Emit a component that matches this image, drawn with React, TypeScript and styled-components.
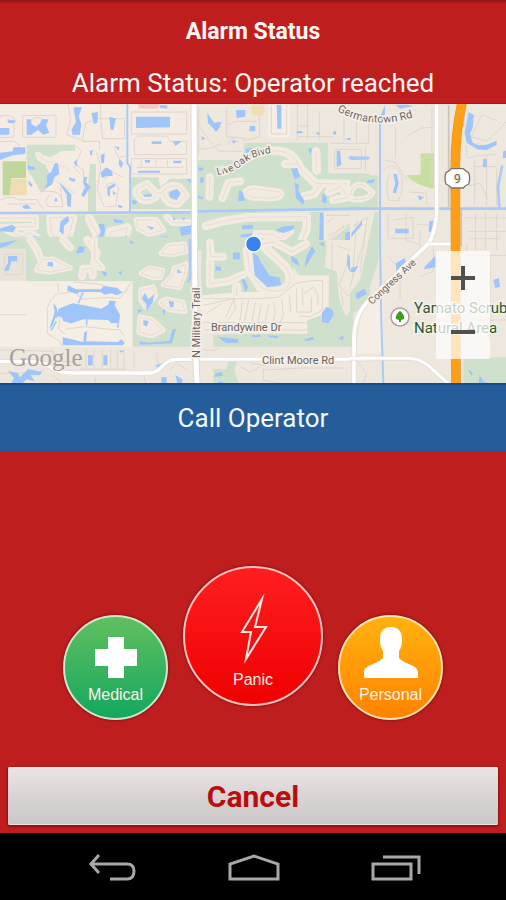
import React from "react";
import styled, { createGlobalStyle } from "styled-components";

const GlobalStyle = createGlobalStyle`
  * { box-sizing: border-box; }
  body { margin: 0; background: #be1e1e; font-family: Roboto, "Liberation Sans", sans-serif; }
  button { font-family: inherit; cursor: pointer; }
`;

const Screen = styled.div`
  display: flex;
  flex-direction: column;
  min-height: 100vh;
  background: #be1e1e;
  overflow: hidden;
`;

const Header = styled.header`
  display: flex;
  flex-direction: column;
  align-items: center;
  padding-top: 15px;
  background: linear-gradient(#8c1416, #be1e1e 4px);
  color: #fff5f3;
  border-bottom: 1px solid #bb1013;
`;

const Title = styled.h1`
  margin: 0;
  font-size: 23px;
  line-height: 34px;
  font-weight: 700;
`;

const Status = styled.p`
  margin: 14px 0 0;
  font-size: 26px;
  line-height: 40px;
`;

const MapPanel = styled.section`
  position: relative;
  aspect-ratio: 506 / 279;
  overflow: hidden;
  background: #f0eae1;
`;

const MapDrawing = styled.svg`
  display: block;
  width: 100%;
  height: 100%;
`;

const ZoomControls = styled.div`
  position: absolute;
  right: 16px;
  bottom: 24px;
  display: flex;
  flex-direction: column;
  background: rgba(255, 255, 255, 0.72);
  border-radius: 2px;
`;

const ZoomButton = styled.button`
  display: grid;
  place-items: center;
  width: 54px;
  height: 54px;
  padding: 0;
  border: 0;
  background: transparent;
`;

const CallButton = styled.button`
  height: 68px;
  padding: 0;
  border: 0;
  border-top: 2px solid #134b8b;
  background: #255d9a;
  color: #f3f9ff;
  font-size: 26px;
`;

const Actions = styled.main`
  flex: 1;
  display: flex;
  justify-content: center;
  align-items: flex-end;
  gap: 15px;
  padding: 40px 0 47px;
`;

const tones = {
  medical: { fill: "linear-gradient(#63c05f, #12a75f)", ring: "#cfe9cf" },
  panic: { fill: "linear-gradient(#ff1f1f, #ee0000)", ring: "#ffc2c0" },
  personal: { fill: "linear-gradient(#ffb310, #ff8200)", ring: "#ffe3b0" },
};

const RoundButton = styled.button<{ $tone: keyof typeof tones; $large?: boolean }>`
  display: flex;
  flex-direction: column;
  align-items: center;
  justify-content: flex-end;
  width: ${(p) => (p.$large ? 140 : 105)}px;
  height: ${(p) => (p.$large ? 140 : 105)}px;
  margin-bottom: ${(p) => (p.$large ? 14 : 0)}px;
  padding: 0 0 ${(p) => (p.$large ? 14 : 13)}px;
  border: 2px solid ${(p) => tones[p.$tone].ring};
  border-radius: 50%;
  background: ${(p) => tones[p.$tone].fill};
  background-origin: border-box;
  box-shadow: 0 0 2px 1px rgba(110, 15, 20, 0.6);
  color: #fff0e6;
  font-family: "Liberation Sans", Arial, sans-serif;
  font-size: 16px;
  line-height: 20px;
`;

const IconSlot = styled.span`
  display: flex;
  margin-bottom: 6px;
`;

const Footer = styled.footer`
  padding: 0 8px 8px;
`;

const CancelButton = styled.button`
  display: block;
  width: 100%;
  height: 58px;
  padding: 0;
  border: 0;
  border-radius: 2px;
  background: linear-gradient(#eae3e3, #cac6c6);
  box-shadow: inset 0 1px #fbe9e9, inset 0 -1px #eee4e4, 0 1px 2px 1px #8f1012;
  color: #b90d10;
  font-size: 30px;
  font-weight: 700;
`;

const NavBar = styled.nav`
  display: grid;
  grid-template-columns: repeat(3, 28%);
  justify-content: center;
  height: 67px;
  background: #000;
`;

const NavButton = styled.button`
  display: grid;
  place-items: center;
  padding: 3px 0 0 2px;
  border: 0;
  background: transparent;
  color: #a8a8a8;
`;

/* Local street: a pale lot band with a thin road line along its middle. */
const Street = ({ d, w = 30, filled = false }: { d: string; w?: number; filled?: boolean }) => (
  <g fill="none" strokeLinejoin="round" strokeLinecap="round">
    <path d={d} stroke="#f3ebe2" strokeWidth={w} fill={filled ? "#f3ebe2" : "none"} />
    <path d={d} stroke="#e0d7cf" strokeWidth="2" />
  </g>
);
const Lanes = ({ d }: { d: string }) => (
  <path d={d} fill="none" stroke="#dfd6ce" strokeWidth="3" strokeLinejoin="round" />
);
const Park = ({ d, color = "#cfe0cd" }: { d: string; color?: string }) => <path d={d} fill={color} />;
const Water = ({ d }: { d: string }) => <path d={d} fill="#9fc5fb" />;
const Canal = ({ d, w = 8 }: { d: string; w?: number }) => (
  <path d={d} fill="none" stroke="#a9cbf6" strokeWidth={w} strokeLinejoin="round" strokeLinecap="round" />
);
const Road = ({ d, w = 14 }: { d: string; w?: number }) => (
  <g fill="none" strokeLinejoin="round">
    <path d={d} stroke="#e2dcd4" strokeWidth={w + 4} />
    <path d={d} stroke="#fff" strokeWidth={w} />
  </g>
);
const Label = styled.text`
  font-family: Roboto, "Liberation Sans", sans-serif;
  fill: #6a635e;
  stroke: #f5f0e9;
  stroke-width: 3px;
  paint-order: stroke;
`;
const PlaceLabel = styled(Label)`
  fill: #2c5a30;
`;
const Brand = styled.text`
  font-family: "Liberation Serif", serif;
  fill: #a8a29c;
`;

const NorthWest = () => (
  <g transform="translate(0 100) scale(.33333)">
    <Park d="M80 134H226V152H186L150 172L105 156L112 180L135 190L150 225L143 262L124 280L108 250L80 205Z" />
    <Park d="M270 192H288V336H264V262Z" />
    <Park d="M390 232H475L480 262L510 236H574V450H390V336L574 336V328H388Z" />
    <Park d="M0 344H574V450H0Z" />
    <Park d="M8 184H78V234H34V286H8Z" color="#c0d79b" />
    <Park d="M34 236H80V286H28Z" color="#eedcb2" />
    <Park d="M415 12H475V26H415Z" color="#f4c7c4" />
    <Lanes d="M0 50Q20 40 42 54V112H0M0 124H44L60 138M68 46H168V112H68ZM96 58Q114 46 132 60M204 12L212 60L200 104L246 120L258 68L302 55V14M246 124H298V150M302 56H374V116H308ZM0 300Q28 284 58 300L110 298L128 326M22 312H108M230 138L244 154L222 204L240 220M290 158L302 200L292 270L312 320M340 140L356 172L378 168M394 36H560V102H394ZM402 120L414 108H500L512 124H560V164H404ZM394 176H560V222H394ZM410 202H550M424 178V200M468 178V200M502 178V200" />
    <Lanes d="M84 220Q108 222 122 272L168 276Q190 290 188 320H144Q130 300 150 284M180 254L188 320M218 186L250 210L252 290M310 240L340 216L368 232M312 266Q338 230 356 264L346 320H316" />
    <Street d="M116 166Q136 194 164 184M156 206Q180 186 206 210M172 244Q206 270 226 280" w={20} />
    <Street d="M415 288Q400 274 420 262L442 252L470 280L488 276Q510 248 540 262L558 286L536 310Q500 318 488 276M415 288Q432 312 466 292" w={24} />
    <Street d="M0 354H106V380L0 382M20 390L64 410L88 398L112 412L124 440" w={22} />
    <Street d="M150 354L154 398L182 432L208 406L220 354Z" w={24} filled />
    <Street d="M268 356L292 404L282 450M330 396L382 384L376 408L332 424Z" w={28} />
    <Street d="M410 360L468 360L490 390L448 402L416 386Z" w={18} filled />
    <Street d="M500 350L518 368H570M488 436Q516 416 562 440" w={20} />
    <Water d="M220 22L246 22L236 48L244 72L240 104L218 104L214 90L228 66ZM274 40L294 36L292 68L282 72ZM328 50L348 56L340 90H332ZM80 58H94V72L108 80L120 70L126 58H146L138 76L148 98L130 104L114 90L94 104H80ZM22 58L50 62L40 70L24 68ZM0 84H28V104H0ZM408 50H510V82L408 84ZM478 16H502V26L480 24ZM455 124H484V132H455ZM518 124L546 124L526 138Z" />
    <Water d="M0 158L38 154L40 142H76V162L38 166L0 180ZM164 190H174L178 222L164 230L156 254L132 266L142 250L140 226L154 216ZM176 246L198 266L214 284L212 322L202 318L200 284ZM252 230L262 232L258 246L272 262L250 292L244 284L256 262L250 248ZM302 166L314 160L312 190L304 190ZM358 176L370 190L364 204L356 194ZM302 218L318 202L336 212L338 228L320 228L306 234ZM322 262L346 250L344 260L330 268L330 290L322 284ZM270 152L278 150L276 166L270 166ZM222 188L230 176L232 202ZM344 138L358 142L356 152ZM162 304L168 292L174 304ZM84 196L106 202L104 210L84 208ZM86 240L98 256L94 262L86 252ZM66 318L82 314L94 326L72 326ZM354 314L368 318L364 324L354 322ZM206 232L228 238L222 246L208 240ZM338 272L350 282L340 284Z" />
    <Water d="M508 278L530 266L542 280L530 300L510 292ZM434 180H450V188H436ZM520 182H544V190H520ZM414 212H480V218H414ZM430 284L456 282L454 290L432 290ZM396 300L412 304L406 314L396 310ZM560 238L574 236V252ZM182 364L204 348L208 362L192 378L190 404L178 394ZM296 372H312L316 392L302 426L290 416L302 396ZM0 386L36 374L48 382L40 396L0 394ZM340 356L370 362L368 370L344 368ZM438 378L462 382L456 390ZM480 410L504 408L494 434L470 428ZM538 382L574 376V402L544 408ZM350 428L382 406L378 420L352 432ZM96 408L132 412L136 430L122 440ZM240 408L254 430L250 444L236 446ZM518 350L528 356L522 362ZM546 352L556 354L550 362Z" />
    <Canal d="M0 339L574 337" w={8} />
    <Canal d="M382 14V190L390 200V337" w={6} />
  </g>
);

const SouthWest = () => (
  <g transform="translate(0 240) scale(.33333)">
    <Park d="M78 20H574V320H398V124H78Z" />
    <Park d="M0 -10H574V30H0Z" />
    <path d="M0 124H396V320H0Z" fill="#f5eee4" />
    <path d="M0 26H78V122H0Z" fill="#e9e2d8" />
    <Lanes d="M14 42H68V104H14ZM0 224H78M174 128L176 158L154 178L142 202V280L180 304L186 320M178 162L226 154L244 178L320 172L356 176L386 148M196 268L250 260L332 268L360 270L374 290M222 126L296 132L372 158L396 124M180 230L176 268L196 282M258 328V388M282 328V388M306 328V388M332 328V388M352 328V388M372 328V388M240 388H380M402 334V380M470 340L472 378M0 330L160 334V362L228 366M0 402L46 398L110 402L132 388M160 404L186 430M286 412V430M430 404L438 430M510 390L530 368L560 390" />
    <Street d="M92 0L112 32L122 56" w={24} />
    <Street d="M126 58L110 90L152 96L210 84L162 58Z" w={16} filled />
    <Street d="M190 0L210 22M262 0L290 38L282 68L300 80M246 108L250 86H278V106" w={24} />
    <Street d="M484 40L504 18L552 12L558 34L518 44ZM488 92L448 84L424 100L456 112H482ZM490 134L516 110L524 84L558 72L552 108L538 142Z" w={16} filled />
    <Street d="M424 150L458 142L466 166L438 200L424 178ZM482 188L500 178L548 188L554 214L510 208ZM422 232L456 240L488 270L454 286L418 276Z" w={18} filled />
    <Street d="M284 0V58L306 84" w={20} />
    <Water d="M0 10L54 0L28 14L0 24ZM24 48H52V64H34L26 92H12L24 68ZM204 136L228 148L302 148L312 138L352 144L368 158L350 166L334 160L314 164L302 156L238 156L230 162L202 152ZM176 206L218 190L252 196L304 206L324 194L328 182L348 184L344 196L360 224L358 248L334 250L324 240L250 238L214 250L190 244L186 232L170 228ZM160 190L170 202L174 232L166 234L158 256L148 266L164 216ZM188 292L250 306L252 278L262 272L258 304L354 306L364 298L374 308L368 316H188Z" />
    <Canal d="M250 154L236 188M260 238V254M354 246V262M168 246L154 270" w={5} />
    <Water d="M434 158L446 178L462 162L458 188L438 214L440 194L426 176ZM412 208L430 210L416 220ZM430 240L446 244L440 260L430 254ZM418 304L448 308L508 302L518 268L528 266L516 310L420 314ZM144 66H158L160 80L142 78ZM238 18L254 22L250 38L228 40ZM302 92L322 98L316 110ZM354 96L366 94L364 108ZM386 0L404 8L392 12ZM532 86L546 98L532 100ZM506 182L522 186L520 202L510 202ZM486 212L496 208L492 228ZM264 346H278V376H264ZM310 346H322V376H310ZM358 330L372 334L362 338ZM464 378L484 370L486 386ZM484 412H500V430H484ZM526 406L548 418L546 430H532Z" />
    <Water d="M24 392L54 400L60 412L84 388L126 396L120 406L92 404L104 424L80 418L68 430L34 428L42 414Z" />
    <Canal d="M570 0L572 110L566 124" w={9} />
    <Road d="M0 365H90Q136 364 152 382Q174 399 224 399H448Q466 399 482 384Q502 360 526 358H574" w={10} />
  </g>
);

const NorthMiddle = () => (
  <g transform="translate(190 100) scale(.33333)">
    <Park d="M22 180H158L164 128H414V220H540V330L22 332Z" />
    <Park d="M22 336H402V450H22Z" />
    <Lanes d="M26 20V160M28 80L64 128L88 154H156M110 20V110L168 116M208 14V110L158 124M114 74L136 64H202M322 14V122M352 14V122M388 34V122M322 78H354M322 110H430M462 58V128M500 66V128M536 66V128M420 130H540M24 146Q60 152 92 130M110 136L128 112L144 128" />
    <path d="M236 12H300V112H232Z" fill="#f5eee4" />
    <Lanes d="M244 16V102H290V16" />
    <Park d="M184 14H222V46H184Z" color="#f0dfb4" />
    <Street d="M60 232L58 290M150 244L116 248L98 294" w={24} />
    <Street d="M164 280Q176 260 208 268L270 276Q280 292 246 294L186 292Z" w={20} filled />
    <Street d="M250 152Q310 150 330 204L376 250L540 254M286 192H326M378 154L380 212M392 252L372 282L338 290" w={26} />
    <Street d="M416 276L452 260L474 292L430 300M482 262H540M504 262L502 300L540 300" w={24} />
    <path d="M424 136H540V220H424Z" fill="#eee7de" />
    <Lanes d="M434 148H514V206H434ZM526 140V214" />
    <Street d="M48 378L96 364L176 352L350 350V386L330 434M200 402L250 404L270 416L300 394" w={26} />
    <path d="M402 336H540V450H402Z" fill="#eee8dd" />
    <Park d="M402 450L414 426L508 354H524L476 434L460 450Z" />
    <Lanes d="M408 346H540M410 370L430 354M414 408L504 358M440 448L472 394M484 446L514 382M508 450L524 360M528 450V380M404 430L462 378" />
    <Water d="M52 38L72 68L94 66L88 84L78 96L66 80L54 70ZM138 30H166V50L140 54ZM180 78H196V94H178ZM260 14H274V86H262ZM34 108L46 116L36 120ZM126 120L140 124L130 132ZM320 94H338V100H320ZM378 96L392 100L382 106ZM430 94H438V104H430ZM470 114H482V120H470ZM168 146L186 144L188 154L166 160ZM354 146L366 144L362 164ZM440 152H450L454 194L440 202ZM478 168L510 172L538 170V178L484 180ZM304 206L322 204L330 230L314 238ZM314 248L328 254L324 270L344 304L338 314L318 294ZM148 270L158 276L166 302L144 304ZM398 278L410 292V310L396 306ZM482 264L494 268L490 290L498 304L486 312L480 292ZM26 202L42 204L38 212H24ZM32 232L40 230V248H30ZM156 376L188 374L190 386L156 388ZM152 404L188 400L180 410L152 412ZM256 390L278 380L314 376L310 388L280 400ZM466 398L484 394L482 424L466 436ZM496 380L516 362L518 370L498 388ZM360 436L376 430L370 450H358Z" />
    <Water d="M390 338H400V450H382L388 412Z" />
    <Canal d="M22 334L540 326M24 290L36 294" w={8} />
  </g>
);

const SouthMiddle = () => (
  <g transform="translate(190 240) scale(.33333)">
    <Park d="M34 0H404L430 80L440 30L540 60V186L490 220L486 320H70V284L350 278V240L410 220L418 114H330L312 80L286 158L34 166Z" />
    <path d="M34 166L150 156H240L320 106H416V218L352 240V282L70 278H34Z" fill="#f3ece0" />
    <path d="M412 0H510L540 110L468 230L448 180L440 96L404 80Z" fill="#efe9dd" />
    <Street d="M60 8L62 50H98M60 60V132L114 124L160 104" w={24} />
    <Street d="M172 30L178 90L212 142Q250 164 288 146Q314 118 286 80L226 24M140 140V166" w={28} />
    <Street d="M208 12L252 6L306 36L348 12" w={24} />
    <Lanes d="M38 176H208L264 172L318 130L364 122H398V210L360 230L328 228M40 196L132 176L108 230M132 176L136 206L112 244M158 180L150 240M176 180L164 244M196 188L186 244M214 194L204 244M236 194L226 244M252 188L256 222L246 250M276 178L280 226L270 248M298 164L302 216M320 146V216H364V172M338 142V196M342 160L370 142L384 162V196M40 248H350M40 270H350M50 220L96 190M442 18L486 34L448 136L474 168L536 124M452 150L460 196M484 154L502 126M508 14V110M426 10V86M528 6V106" />
    <Water d="M188 36L204 48L212 66L240 108L268 112L274 136L232 142L194 106ZM128 38L150 38V58H130ZM78 78L94 82L92 92H76ZM154 116L164 118L174 142L166 156ZM396 218L410 200L428 210L432 222L416 250L396 246ZM366 18L376 34L362 54L344 84L348 54ZM304 48L322 58L328 78L304 64ZM386 10L402 6V20ZM474 38L484 64L478 94L470 70ZM508 76L492 92L488 102L506 96ZM522 178L540 184L526 198ZM84 290L146 298L144 308L108 310ZM184 286L212 284V290L188 292ZM232 286L266 288L262 294L238 292ZM342 300L368 290L374 298L348 304ZM444 296L462 286L458 300Z" />
    <Park d="M70 386L108 388L116 364L140 366L134 390L146 430H70Z" />
    <Water d="M76 400L96 396L98 408L74 410ZM80 430L92 424L104 430Z" />
    <Lanes d="M34 328L70 332L86 324M150 380L180 396L210 380M220 384V420L272 430M220 390L340 384H460M180 368L230 378M498 360L530 400L520 430" />
    <Road d="M28 358H540" w={9} />
  </g>
);

const East = () => (
  <g transform="translate(350 100) scale(.33333)">
    <Park d="M0 226H84V322H0Z" />
    <Park d="M0 336H86V480L40 620L0 640V560Z" />
    <path d="M0 336H74L30 540L0 580Z" fill="#efe9dd" />
    <Park d="M212 160H252V266Q200 260 168 226L212 224Z" color="#c7dfa3" />
    <path d="M100 546Q20 620 20 760H100Z" fill="#f5eee5" />
    <Lanes d="M104 180L134 186L170 240M136 86L136 176M246 20V250M168 110L214 84L250 82M100 210Q130 178 154 226Q164 270 144 304L116 300Q104 260 118 220M178 276L230 280V316M168 340V420L212 436M130 360L188 352L190 414L120 416M198 372L258 378M210 390V440M114 340V420M350 134Q344 190 374 168L440 162M396 44L364 110L408 124L440 96L468 66M396 44L440 62M374 182V318M410 168V318M440 206V316M376 200H440M352 258L390 250L410 290M344 354H468M350 394H468M376 340V450M406 340V450M440 340V450M358 416H450M350 430V580M376 466H468M420 470V720M330 620H468M348 660H468M390 600V720M116 470L150 510V600M210 530L250 514V430M8 380L52 352L40 430L0 560M20 360L8 530M48 382L30 520" />
    <Street d="M0 286Q10 246 42 256L68 278Q56 302 8 298" w={18} />
    <Water d="M106 14L92 46L92 72L104 50ZM136 14H172L190 18L150 26ZM356 36L372 46L368 84L360 100L368 128L386 136L410 134L440 122V134L410 150L382 148L350 128L344 96ZM130 222H140L146 248L138 280L128 278L136 250ZM204 286L222 292L208 302ZM136 386H176V400H136ZM238 364L250 362V406L236 394ZM54 240L76 238L68 250L50 250ZM0 170H54V178H0ZM400 176L410 178V202L398 200ZM460 152H468V174H458ZM138 490L164 474L172 510L138 516ZM226 498L256 468V502L222 508ZM2 504L26 498L14 516H0ZM430 540L446 534L450 560L436 564ZM18 580L44 566L50 582L20 598ZM4 400L36 362V374L4 412Z" />
    <Canal d="M0 326H468M456 200L444 260L448 322M0 174H54" w={8} />
    <Canal d="M90 70V420L94 660L100 850" w={6} />
    <Park d="M340 772H468V860H340Z" />
    <Water d="M354 806L368 820L364 830ZM388 824L400 842L416 852H386Z" />
    <path d="M296 14V320M344 14L340 80M334 330V440" fill="none" stroke="#c9c4bf" strokeWidth="5" />
    <Road d="M260 0V320Q262 376 238 428L50 608Q12 648 12 720V860" w={11} />
    <Road d="M238 432H304M0 775H180Q220 778 252 812L300 856" w={9} />
    <path d="M338 0Q316 90 316 200L318 860" fill="none" stroke="#e5982b" strokeWidth="29" />
    <path d="M338 0Q316 90 316 200L318 860" fill="none" stroke="#ff9f18" strokeWidth="25" />
    <path d="M304 206H340Q346 214 356 218Q362 234 356 252Q346 256 340 264H304Q298 256 288 252Q282 234 288 218Q298 214 304 206Z" fill="#fff" stroke="#77736c" strokeWidth="4" strokeLinejoin="round" />
  </g>
);

const AreaMap = () => (
  <MapDrawing viewBox="0 104 506 279" preserveAspectRatio="xMidYMid slice" role="img" aria-label="Map of your location">
    <defs>
      <path id="germantown" d="M337 111Q374 132 420 115" />
      <path id="liveoak" d="M217 175Q236 172 243 164Q252 156 272 153" />
    </defs>
    <rect y="104" width="506" height="279" fill="#eee7de" />
    <rect y="104" width="193" height="108" fill="#f4ece3" />
    <NorthWest />
    <SouthWest />
    <NorthMiddle />
    <SouthMiddle />
    <East />
    <path d="M194 104L195 340L197 383" fill="none" stroke="#e0dad2" strokeWidth="7" />
    <path d="M194 104L195 340L197 383" fill="none" stroke="#fff" strokeWidth="5" />
    <Label fontSize="11" transform="translate(200 358) rotate(-90)">N Military Trail</Label>
    <Label fontSize="10"><textPath href="#liveoak">Live Oak Blvd</textPath></Label>
    <Label fontSize="11"><textPath href="#germantown">Germantown Rd</textPath></Label>
    <Label fontSize="10" transform="translate(372 305) rotate(-43)">Congress Ave</Label>
    <Label fontSize="11" x="211" y="331">Brandywine Dr</Label>
    <Label fontSize="11" x="262" y="364">Clint Moore Rd</Label>
    <Label fontSize="12" x="454" y="183">9</Label>
    <PlaceLabel fontSize="15" x="414" y="313">Yamato Scrub</PlaceLabel>
    <PlaceLabel fontSize="15" x="414" y="333">Natural Area</PlaceLabel>
    <circle cx="400" cy="317" r="9" fill="#fff" stroke="#aaa49c" strokeWidth="1.5" />
    <path d="M400 311C403 313 405 317 404 319L401 320V322H399V320L396 319C395 317 397 313 400 311Z" fill="#3f9d1c" />
    <Brand fontSize="25" x="9" y="366">Google</Brand>
    <circle cx="253.5" cy="244" r="8" fill="#3b82f0" stroke="#f5f8fc" strokeWidth="1.5" />
  </MapDrawing>
);

const MedicalIcon = () => (
  <svg width="44" height="42" viewBox="0 0 44 42" aria-hidden="true">
    <path d="M14 0H30V12H43V29H30V41H14V29H1V12H14Z" fill="#fff" />
  </svg>
);
const PanicIcon = () => (
  <svg width="32" height="74" viewBox="0 0 32 74" aria-hidden="true">
    <path d="M25 9L5 42L14 42L9 69L29 37L18 37Z" fill="none" stroke="#ffe9e7" strokeWidth="2" strokeLinejoin="miter" strokeMiterlimit="8" />
  </svg>
);
const PersonalIcon = () => (
  <svg width="54" height="52" viewBox="0 0 54 52" aria-hidden="true">
    <path d="M27 0C34 0 38 4 38 12C38 18 37 21 35 24V31C40 37 54 38 54 45V51H0V45C0 38 14 37 19 31V24C17 21 16 18 16 12C16 4 20 0 27 0Z" fill="#fff" />
  </svg>
);

export default function App() {
  return (
    <>
      <GlobalStyle />
      <Screen>
        <Header>
          <Title>Alarm Status</Title>
          <Status>Alarm Status: Operator reached</Status>
        </Header>
        <MapPanel>
          <AreaMap />
          <ZoomControls>
            <ZoomButton aria-label="Zoom in">
              <svg width="26" height="26" viewBox="0 0 26 26">
                <path d="M13 1V25M1 13H25" stroke="#50504e" strokeWidth="4" />
              </svg>
            </ZoomButton>
            <ZoomButton aria-label="Zoom out">
              <svg width="26" height="26" viewBox="0 0 26 26">
                <path d="M1 13H25" stroke="#50504e" strokeWidth="4" />
              </svg>
            </ZoomButton>
          </ZoomControls>
        </MapPanel>
        <CallButton>Call Operator</CallButton>
        <Actions>
          <RoundButton $tone="medical">
            <IconSlot><MedicalIcon /></IconSlot>
            Medical
          </RoundButton>
          <RoundButton $tone="panic" $large>
            <IconSlot><PanicIcon /></IconSlot>
            Panic
          </RoundButton>
          <RoundButton $tone="personal">
            <IconSlot><PersonalIcon /></IconSlot>
            Personal
          </RoundButton>
        </Actions>
        <Footer>
          <CancelButton>Cancel</CancelButton>
        </Footer>
        <NavBar>
          <NavButton aria-label="Back">
            <svg width="48" height="28" viewBox="0 0 48 28" fill="none" stroke="currentColor" strokeWidth="3">
              <path d="M11 1L3 10L11 19M3 10H39Q46 10 46 17Q46 25 39 25H22" />
            </svg>
          </NavButton>
          <NavButton aria-label="Home">
            <svg width="52" height="28" viewBox="0 0 52 28" fill="none" stroke="currentColor" strokeWidth="3">
              <path d="M2 25V10L26 2L50 10V25Z" />
            </svg>
          </NavButton>
          <NavButton aria-label="Recent apps">
            <svg width="50" height="28" viewBox="0 0 50 28" fill="none" stroke="currentColor" strokeWidth="3">
              <path d="M2 10H40V25H2ZM12 3H48V20" />
            </svg>
          </NavButton>
        </NavBar>
      </Screen>
    </>
  );
}
